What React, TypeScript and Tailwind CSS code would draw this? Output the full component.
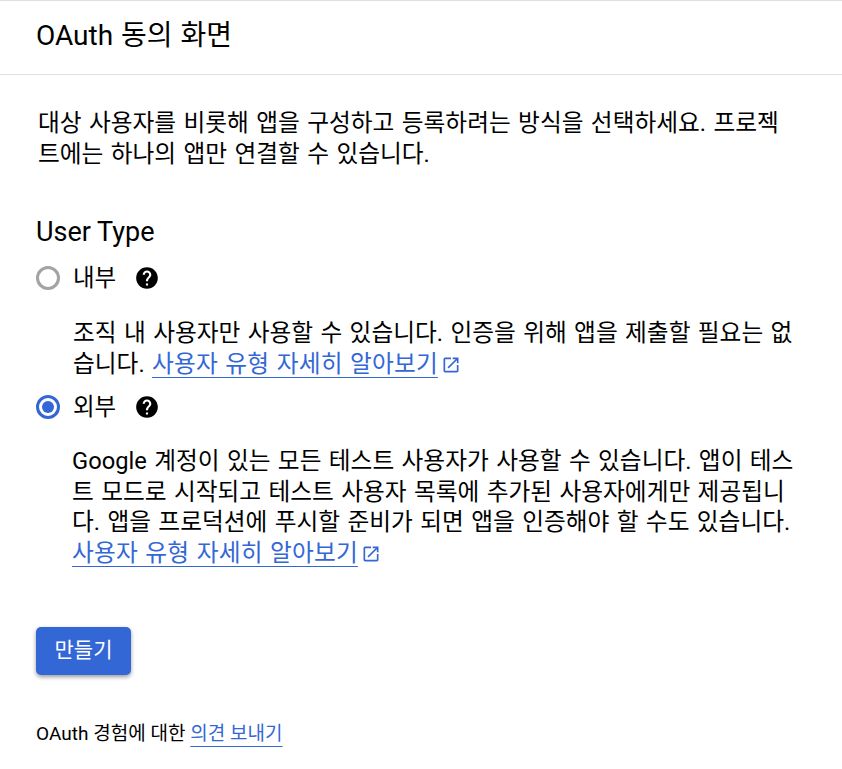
const FONT = "font-['Roboto','Noto_Sans_CJK_KR',sans-serif]";
const BODY = "text-[23.7px] leading-[30.5px] [word-spacing:1.5px]";

function HelpIcon() {
  return (
    <svg viewBox="0 0 24 24" className="h-[26px] w-[26px]" fill="#000">
      <path d="M12 2C6.48 2 2 6.48 2 12s4.48 10 10 10 10-4.48 10-10S17.52 2 12 2zm1 17h-2v-2h2v2zm2.07-7.75l-.9.92C13.45 12.9 13 13.5 13 15h-2v-.5c0-1.1.45-2.1 1.17-2.83l1.24-1.26c.37-.36.59-.86.59-1.41 0-1.1-.9-2-2-2s-2 .9-2 2H8c0-2.21 1.79-4 4-4s4 1.79 4 4c0 .88-.36 1.68-.93 2.25z" />
    </svg>
  );
}

function ExternalIcon() {
  return (
    <svg viewBox="0 0 24 24" className="ml-[3px] inline-block h-[20px] w-[20px]" fill="#3367d6">
      <path d="M19 19H5V5h7V3H5c-1.11 0-2 .9-2 2v14c0 1.1.89 2 2 2h14c1.1 0 2-.9 2-2v-7h-2v7zM14 3v2h3.59l-9.83 9.83 1.41 1.41L19 6.41V10h2V3h-7z" />
    </svg>
  );
}

function LearnMore() {
  return (
    <>
      <a href="#" className="text-[#3367d6] underline decoration-[#3367d6] decoration-1 underline-offset-[5px] tracking-[0.15px]">
        사용자 유형 자세히 알아보기
      </a>
      <ExternalIcon />
    </>
  );
}

function Radio({ checked }: { checked?: boolean }) {
  return (
    <span
      className={
        checked
          ? "flex h-[24px] w-[24px] items-center justify-center rounded-full border-[3px] border-[#3367d6]"
          : "flex h-[24px] w-[24px] items-center justify-center rounded-full border-[3px] border-[#a3a3a3]"
      }
    >
      {checked && <span className="h-[12px] w-[12px] rounded-full bg-[#3367d6]" />}
    </span>
  );
}

function Option({ label, checked }: { label: string; checked?: boolean }) {
  return (
    <div className="flex h-[32px] items-center">
      <Radio checked={checked} />
      <span className="ml-[13px] text-[23.5px] leading-[32px]">{label}</span>
      <span className="ml-[18px]">
        <HelpIcon />
      </span>
    </div>
  );
}

export default function App() {
  return (
    <div className={`${FONT} min-h-[769px] w-[842px] overflow-hidden bg-white text-black`}>
      <header className="h-[75px] border-y border-[#dfe0e3] pl-[36px] pt-[17px] text-[28px] leading-[36px] [word-spacing:1px]">
        OAuth 동의 화면
      </header>

      <main className="pl-[36px] pr-[34px]">
        <p className={`${BODY} pl-[2px] pr-[14px] pt-[33px]`}>
          대상 사용자를 비롯해 앱을 구성하고 등록하려는 방식을 선택하세요. 프로젝트에는 하나의 앱만 연결할 수 있습니다.
        </p>

        <h2 className="mt-[47px] text-[27px] leading-[32px]">User Type</h2>

        <div className="mt-[14px]">
          <Option label="내부" />
          <p className={`${BODY} mt-[24px] pl-[37px]`}>
            조직 내 사용자만 사용할 수 있습니다. 인증을 위해 앱을 제출할 필요는 없습니다. <LearnMore />
          </p>
        </div>

        <div className="mt-[12px]">
          <Option label="외부" checked />
          <p className={`${BODY} mt-[23px] pl-[36px]`}>
            Google 계정이 있는 모든 테스트 사용자가 사용할 수 있습니다. 앱이 테스트 모드로 시작되고 테스트 사용자 목록에 추가된 사용자에게만 제공됩니다. 앱을 프로덕션에 푸시할 준비가 되면 앱을 인증해야 할 수도 있습니다. <LearnMore />
          </p>
        </div>

        <button className="mt-[59px] block h-[48px] w-[95px] rounded-[5px] bg-[#3367d6] text-[21px] text-white shadow-[0_2px_4px_rgba(0,0,0,0.4)]">
          만들기
        </button>

        <p className="mt-[45px] text-[19px] leading-[28px] tracking-[0.03px]">
          OAuth 경험에 대한{" "}
          <a href="#" className="text-[#3367d6] underline decoration-[#3367d6] decoration-1 underline-offset-[6px]">
            의견 보내기
          </a>
        </p>
      </main>
    </div>
  );
}
